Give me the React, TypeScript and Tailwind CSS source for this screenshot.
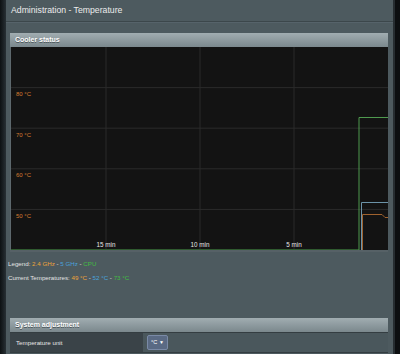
const font = { fontFamily: '"Liberation Sans", Arial, sans-serif' }

const tempLines = [
  { label: "80 °C", y: 40.6 },
  { label: "70 °C", y: 81.2 },
  { label: "60 °C", y: 121.8 },
  { label: "50 °C", y: 162.4 },
]

const timeLines = [
  { label: "15 min", x: 95 },
  { label: "10 min", x: 189 },
  { label: "5 min", x: 283 },
]

function CoolerChart() {
  return (
    <svg width="377" height="203" viewBox="0 0 377 203" className="block">
      <rect width="377" height="203" fill="#131313" />
      {tempLines.map((t) => (
        <line key={t.label} x1="0" x2="377" y1={t.y} y2={t.y} stroke="#2b2b2b" strokeWidth="1" />
      ))}
      {timeLines.map((t) => (
        <line key={t.label} x1={t.x} x2={t.x} y1="0" y2="203" stroke="#2b2b2b" strokeWidth="1" />
      ))}
      {tempLines.map((t) => (
        <text key={t.label} x="5" y={t.y + 8.5} fontSize="6" fill="#d67a30" style={font}>
          {t.label}
        </text>
      ))}
      {timeLines.map((t) => (
        <text key={t.label} x={t.x} y="200" fontSize="6.3" fill="#e6e6e6" textAnchor="middle" style={font}>
          {t.label}
        </text>
      ))}
      {/* cpu sits at 0 until data arrives */}
      <line x1="0" x2="348" y1="202.5" y2="202.5" stroke="#2f5a2f" strokeWidth="1" />
      <polyline points="348,203 348,70.5 377,70.5" fill="none" stroke="#4f9a4f" strokeWidth="1" />
      <polyline points="350.5,203 350.5,155.5 377,155.5" fill="none" stroke="#6c93a8" strokeWidth="1" />
      <polyline points="351.5,203 351.5,167.5 371,167.5 374,170.5 377,170.5" fill="none" stroke="#a0622e" strokeWidth="1" />
    </svg>
  )
}

function SectionBar({ title }: { title: string }) {
  return (
    <div className="flex h-[14px] items-center bg-gradient-to-b from-[#a1adb1] to-[#7b888d] px-[5px] text-[7px] font-bold text-white [text-shadow:0_1px_0_#4a5458]">
      {title}
    </div>
  )
}

export default function App() {
  return (
    <div className="flex h-[354px] w-[400px] overflow-hidden" style={font}>
      <div className="w-[6px] bg-gradient-to-r from-[#0d1113] to-[#283035]" />
      <div className="flex flex-1 flex-col bg-[#4d5a5f]">
        <div className="flex h-[22px] items-center border-b border-[#3c474b] pl-[5px] text-[8.7px] text-[#ececec]">
          Administration - Temperature
        </div>
        <div className="h-px bg-[#56636a]" />

        <div className="ml-[4px] mr-[5px] mt-[10px]">
          <SectionBar title="Cooler status" />
          <div className="border-l border-[#5d686d]">
            <CoolerChart />
          </div>
          <div className="h-[2px] bg-[#566166]" />
        </div>

        <div className="mt-[5px] pl-[2px] text-[6.2px] leading-[14px] text-[#e4e4e4]">
          <div>
            Legend: <span className="text-[#eda43a]">2.4 GHz</span> -{" "}
            <span className="text-[#4aa2dd]">5 GHz</span> - <span className="text-[#42bd42]">CPU</span>
          </div>
          <div>
            Current Temperatures: <span className="text-[#eda43a]">49 °C</span> -{" "}
            <span className="text-[#4aa2dd]">52 °C</span> - <span className="text-[#42bd42]">73 °C</span>
          </div>
        </div>

        <div className="ml-[4px] mr-[5px] mt-[33px]">
          <SectionBar title="System adjustment" />
          <div className="flex h-[21px] border-b border-t border-[#343d41]">
            <div className="flex w-[133px] items-center bg-[#3a4348] pl-[6px] text-[6.2px] text-[#e6e6e6]">
              Temperature unit
            </div>
            <div className="flex flex-1 items-center bg-[#4a575c] pl-[4px]">
              <div className="flex h-[15px] w-[21px] items-center justify-center gap-[2px] rounded-[2px] border border-[#7a8aa6] bg-[#5a6a84] text-[5.5px] text-white">
                °C <span className="text-[5px]">▼</span>
              </div>
            </div>
          </div>
        </div>
      </div>
      <div className="flex w-[7px]">
        <div className="w-[2px] bg-[#262d31]" />
        <div className="flex-1 bg-[#0c0f11]" />
      </div>
    </div>
  )
}
